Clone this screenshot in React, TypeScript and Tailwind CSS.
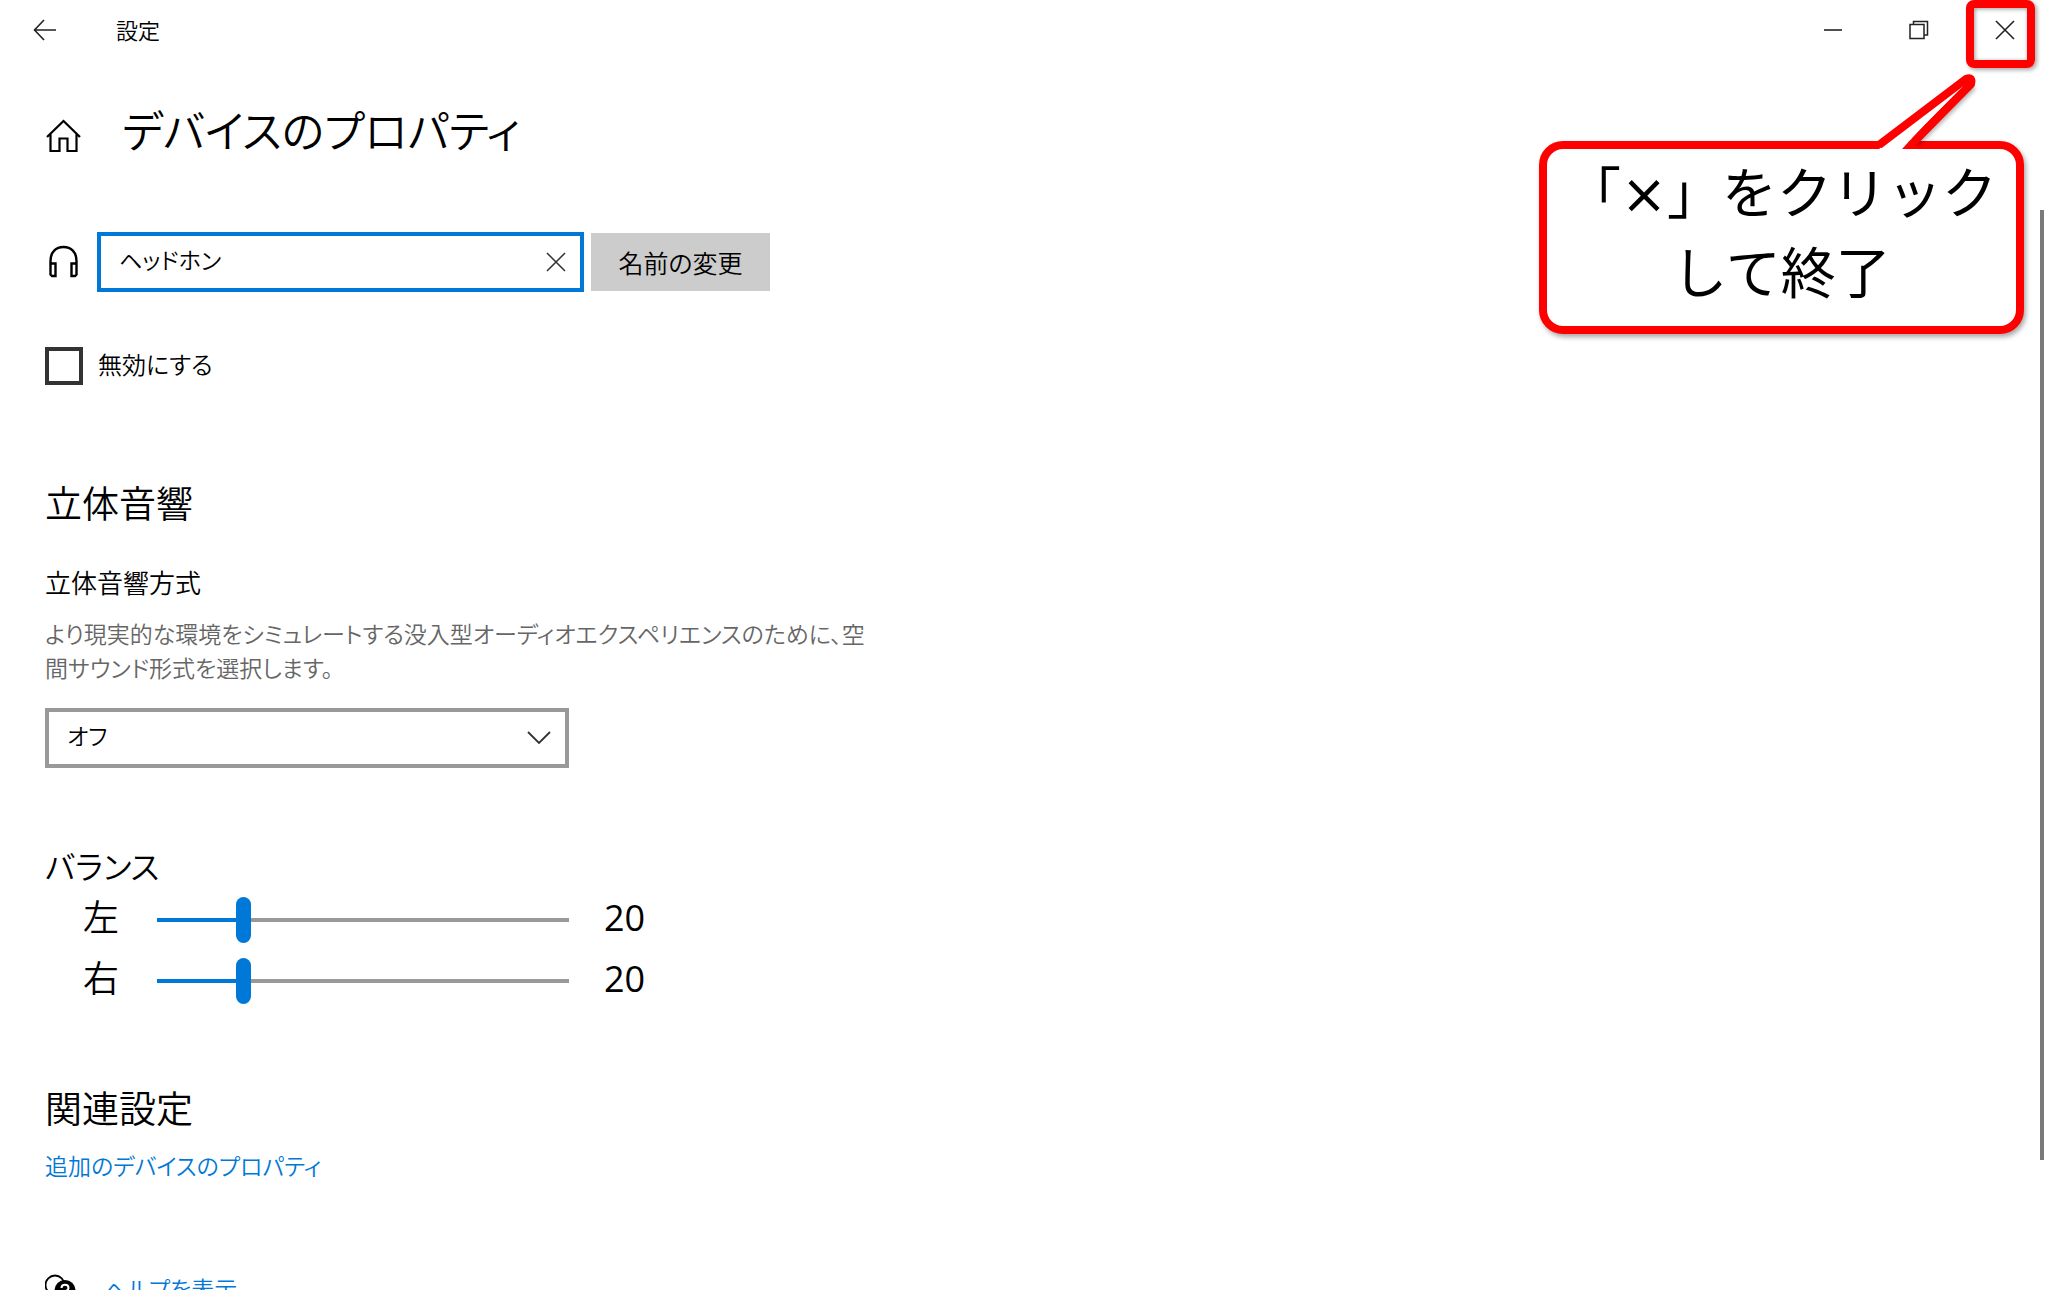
import { useState } from 'react';

function Balance({ id, label }: { id: string; label: string }) {
  const [value, setValue] = useState(20);

  return (
    <div className="flex items-center h-[61px] pl-[38px]">
      <label htmlFor={id} className="w-[74px] pb-[10px] text-4xl leading-[48px]">{label}</label>
      <input
        id={id}
        type="range"
        min={0}
        max={100}
        value={value}
        onChange={e => setValue(+e.target.value)}
        style={{ backgroundImage: `linear-gradient(to right, #0078d7 ${value}%, #999999 ${value}%)` }}
        className="w-[412px] h-[46px] appearance-none bg-no-repeat bg-center bg-[length:100%_4px] [&::-webkit-slider-thumb]:appearance-none [&::-webkit-slider-thumb]:w-[15px] [&::-webkit-slider-thumb]:h-[46px] [&::-webkit-slider-thumb]:rounded-full [&::-webkit-slider-thumb]:bg-[#0078d7]"
      />
      <output htmlFor={id} className="pl-[35px] pb-1 font-['Open_Sans',sans-serif] font-normal text-4xl leading-[48px]">{value}</output>
    </div>
  );
}

export default function DeviceProperties() {
  const [name, setName] = useState('ヘッドホン');
  const [disabled, setDisabled] = useState(false);
  const [format, setFormat] = useState('off');

  return (
    <div lang="ja" className="relative h-screen overflow-hidden flex flex-col bg-white text-black font-['Noto_Sans_CJK_JP',sans-serif] font-[350] [font-feature-settings:'palt']">
      <header className="flex items-center h-[60px] shrink-0">
        <button aria-label="戻る" className="flex items-center justify-center w-[90px] h-full">
          <svg width="24" height="22" viewBox="0 0 24 22" fill="none" stroke="#222" strokeWidth="1.6"><path d="M23 11H2M11 1L1.5 11L11 21" /></svg>
        </button>
        <span className="pl-[26px] pb-[2px] text-[22px] leading-8">設定</span>
        <div className="ml-auto flex h-full">
          <button aria-label="最小化" className="flex items-center justify-center w-[86px]">
            <svg width="20" height="20" viewBox="0 0 20 20" stroke="#222" strokeWidth="1.6"><path d="M1 10H19" /></svg>
          </button>
          <button aria-label="元に戻す" className="flex items-center justify-center w-[86px]">
            <svg width="20" height="20" viewBox="0 0 20 20" fill="none" stroke="#222" strokeWidth="1.5"><path d="M1 4.5H15V18.500H1ZM4.500 4.500V1.500H18.500V15H15" /></svg>
          </button>
          <button aria-label="閉じる" className="flex items-center justify-center w-[86px]">
            <svg width="20" height="20" viewBox="0 0 20 20" stroke="#222" strokeWidth="1.6"><path d="M1 1L19 19M19 1L1 19" /></svg>
          </button>
        </div>
      </header>

      <div className="flex flex-1 min-h-0">
        <main className="flex-1 pl-[45px] overflow-hidden">
          <div className="flex items-center mt-[33px]">
            <svg width="37" height="36" viewBox="0 0 37 36" fill="none" stroke="#000" strokeWidth="2.2" className="mt-3"><path d="M2 20L18.500 4L35 20M5.500 17V34H14.500V21.500H22.500V34H31.500V17" /></svg>
            <h1 className="pl-10 text-[44px] leading-[72px]">デバイスのプロパティ</h1>
          </div>

          <div className="flex items-center mt-[67px]">
            <svg width="36" height="36" viewBox="0 0 36 36" fill="none" stroke="#000" strokeWidth="2.4"><path d="M5.500 31V17C5.500 8 11 3 18.500 3S31.500 8 31.500 17V31M5.500 19.500H10.500V32H7L5.500 30.500ZM31.500 19.500H26.500V32H30L31.500 30.500Z" /></svg>
            <div className="ml-4 flex items-center w-[487px] h-[60px] border-4 border-[#0078d7] bg-white">
              <input aria-label="デバイス名" value={name} onChange={e => setName(e.target.value)} className="flex-1 min-w-0 pl-[18px] pb-[6px] text-[23px] leading-9 outline-none" />
              <button aria-label="クリア" onClick={() => setName('')} className="flex items-center justify-center w-12 h-full">
                <svg width="20" height="20" viewBox="0 0 20 20" stroke="#333" strokeWidth="1.5"><path d="M1 1L19 19M19 1L1 19" /></svg>
              </button>
            </div>
            <button className="ml-[7px] w-[179px] h-[58px] bg-[#cccccc] text-[25px] leading-9">名前の変更</button>
          </div>

          <div className="flex items-center mt-[55px]">
            <input id="disable" type="checkbox" checked={disabled} onChange={e => setDisabled(e.target.checked)} className="appearance-none w-[38px] h-[38px] border-4 border-[#333333] checked:bg-[#0078d7]" />
            <label htmlFor="disable" className="pl-[15px] pb-1 text-[24px] leading-[34px]">無効にする</label>
          </div>

          <h2 className="mt-[93px] text-[37px] leading-[48px]">立体音響</h2>
          <label htmlFor="format" className="block mt-[38px] text-[26px] leading-9">立体音響方式</label>
          <p className="mt-4 text-[23px] leading-[34px] text-[#666666]">
            より現実的な環境をシミュレートする没入型オーディオエクスペリエンスのために、空<br />間サウンド形式を選択します。
          </p>
          <div className="relative mt-6 w-[524px]">
            <select id="format" value={format} onChange={e => setFormat(e.target.value)} className="block appearance-none w-full h-[60px] pl-[18px] pb-[6px] border-4 border-[#999999] bg-white text-[23px] leading-9">
              <option value="off">オフ</option>
            </select>
            <svg width="24" height="14" viewBox="0 0 24 14" fill="none" stroke="#333" strokeWidth="1.8" className="absolute right-[18px] top-[23px] pointer-events-none"><path d="M1 1L12 12L23 1" /></svg>
          </div>

          <h2 className="mt-[73px] text-[32px] leading-[48px]">バランス</h2>
          <Balance id="left" label="左" />
          <Balance id="right" label="右" />

          <h2 className="mt-[72px] text-[37px] leading-[48px]">関連設定</h2>
          <a href="#properties" className="block w-fit mt-4 text-[23px] leading-9 text-[#0078d7]">追加のデバイスのプロパティ</a>

          <div className="flex items-start mt-[87px]">
            <svg width="32" height="32" viewBox="0 0 32 32" className="mt-1">
              <circle cx="10" cy="11" r="9.500" fill="#fff" stroke="#000" strokeWidth="1.8" />
              <circle cx="20" cy="16.500" r="10.500" fill="#000" />
              <path d="M16.500 14C16.500 9.500 23.500 9.500 23.500 14C23.500 16.500 20 16.500 20 19.500" fill="none" stroke="#fff" strokeWidth="2" />
            </svg>
            <a href="#help" className="pl-[27px] text-[23px] leading-9 text-[#0078d7]">ヘルプを表示</a>
          </div>
        </main>
        <div className="w-2 pt-[150px]">
          <div className="w-1 h-[88%] bg-[#7a7a7a]" />
        </div>
      </div>

      {/* annotation over the close button */}
      <div className="absolute right-[13px] top-0 w-[69px] h-[68px] border-8 border-[#ff0000] rounded-lg pointer-events-none shadow-[2px_2px_4px_rgba(0,0,0,0.35),inset_1px_1px_4px_rgba(0,0,0,0.4)]" />
      <div className="absolute right-6 top-[141px] w-[485px] h-[193px] border-8 border-[#ff0000] rounded-3xl bg-white shadow-[2px_3px_5px_rgba(0,0,0,0.35)] text-center text-[55px] leading-[80px] font-normal [font-feature-settings:normal]">
        「<span className="font-['DejaVu_Sans',sans-serif] leading-none">×</span>」をクリック<br />して終了
      </div>
      <svg width="110" height="80" viewBox="0 0 110 80" fill="none" className="absolute right-[66px] top-[70px]">
        <path d="M42 71L99 14" stroke="#ff0000" strokeWidth="8" className="drop-shadow-[2px_2px_2px_rgba(0,0,0,0.3)]" />
        <path d="M7 79L94 10L30 79Z" fill="#fff" />
        <path d="M7 75L94 9Q101 6 99 14L39 75" stroke="#ff0000" strokeWidth="8" />
      </svg>
    </div>
  );
}
